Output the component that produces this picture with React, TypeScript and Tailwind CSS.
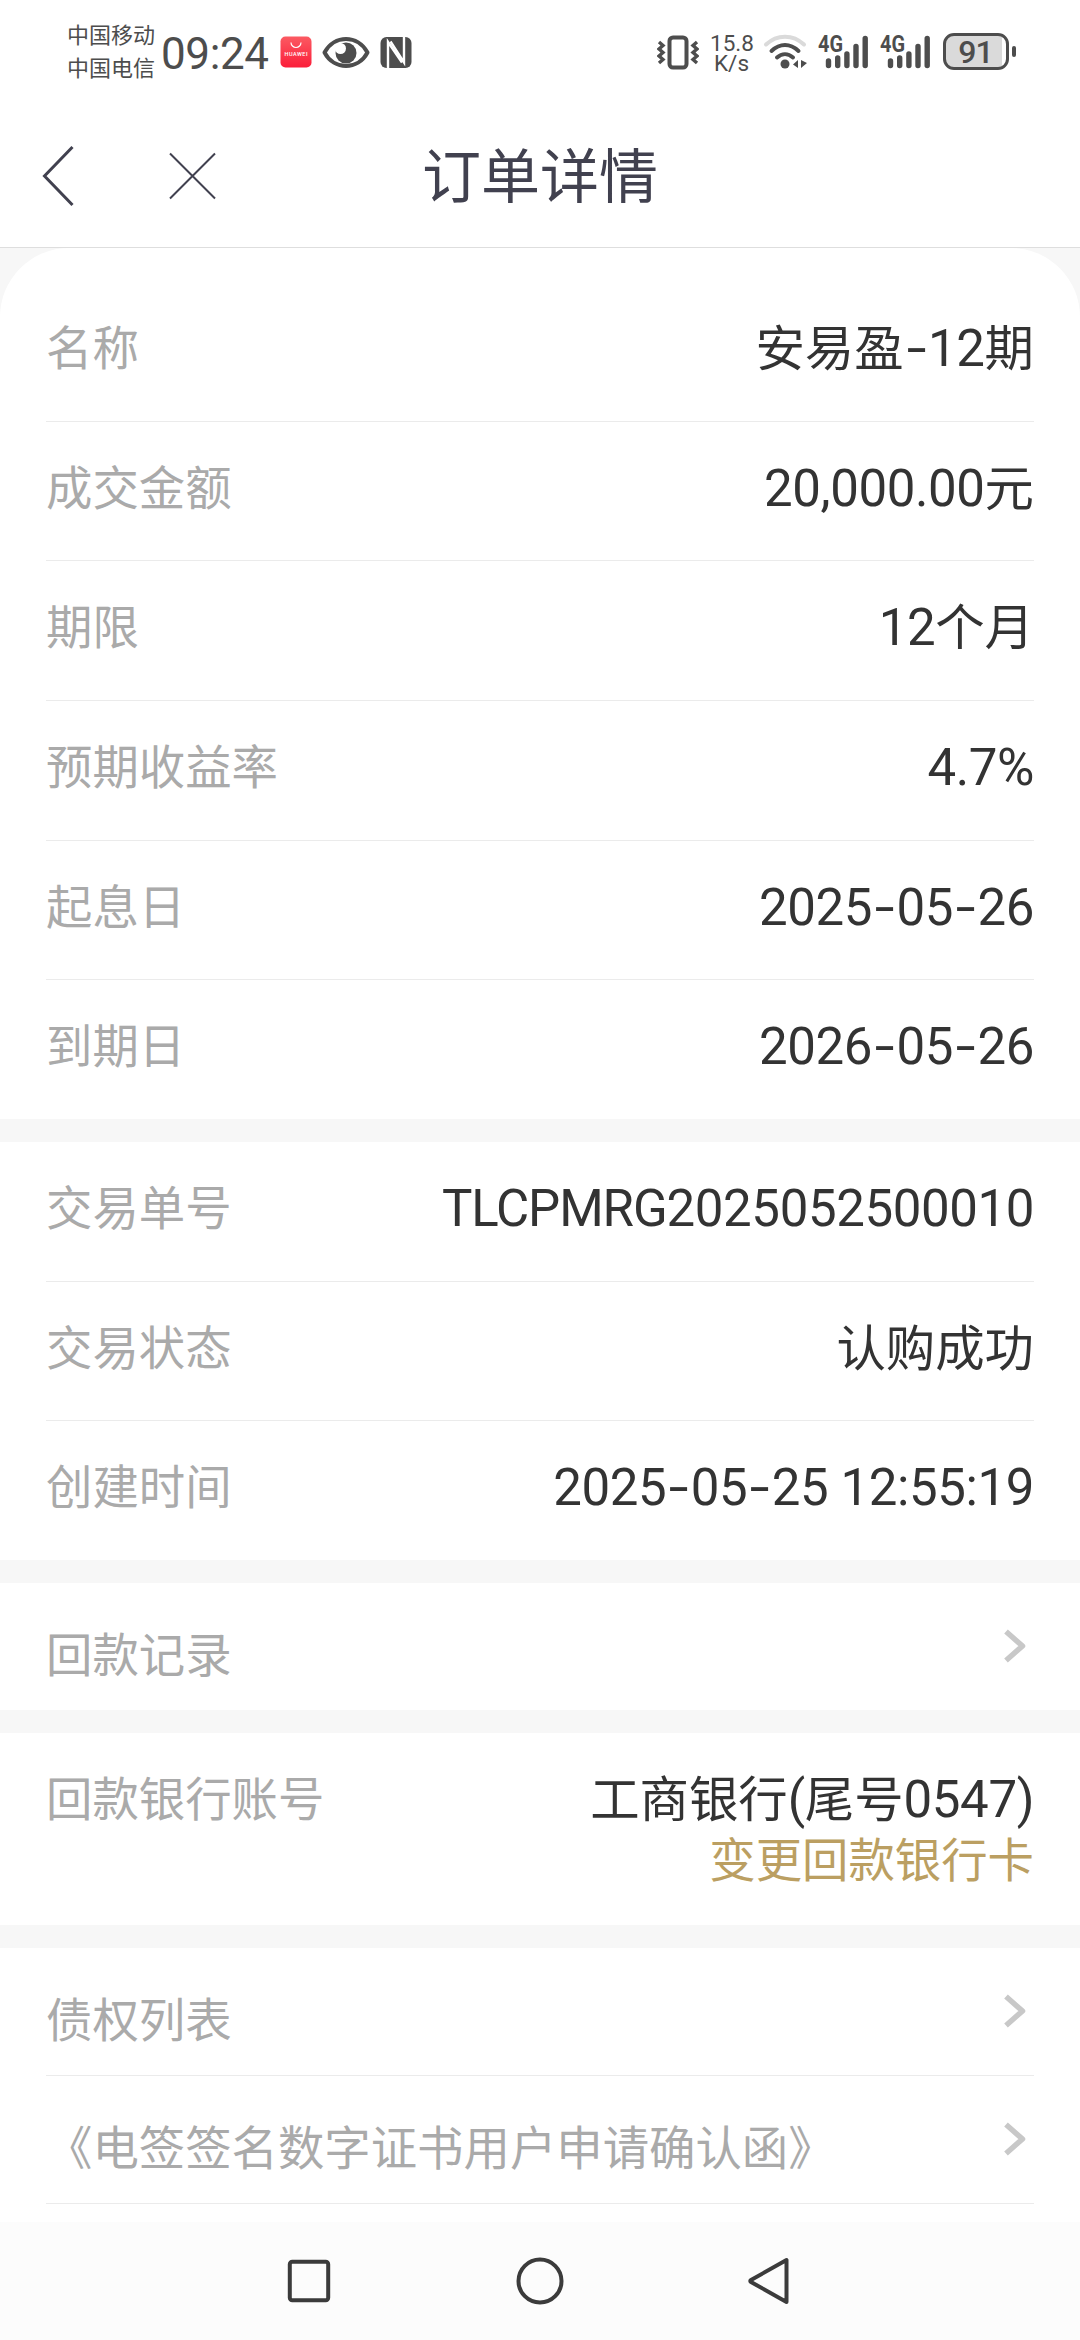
import type { ReactNode } from 'react'

type RowData = { label: string; value: ReactNode }

const ORDER_ROWS: RowData[] = [
  { label: '名称', value: <>安易盈<Num><Dash />12</Num>期</> },
  { label: '成交金额', value: <><Num>20,000.00</Num>元</> },
  { label: '期限', value: <><Num>12</Num>个月</> },
  { label: '预期收益率', value: <Num>4.7%</Num> },
  { label: '起息日', value: <Num>2025<Dash />05<Dash />26</Num> },
  { label: '到期日', value: <Num>2026<Dash />05<Dash />26</Num> },
]

const TRADE_ROWS: RowData[] = [
  {
    label: '交易单号',
    value: (
      <Num>
        <span className="tracking-[-1.1px]">TLCPMRG</span>2025052500010
      </Num>
    ),
  },
  { label: '交易状态', value: '认购成功' },
  { label: '创建时间', value: <Num>2025<Dash />05<Dash />25 12:55:19</Num> },
]

// Latin text and digits run slightly larger than the CJK around them
function Num({ children }: { children: ReactNode }) {
  return <span className="text-[51px] tracking-[-0.4px]">{children}</span>
}

function Dash() {
  return <span className="inline-block w-[24.5px] origin-center scale-x-[1.4] text-center">-</span>
}

function Signal() {
  return (
    <svg className="overflow-visible" width="52" height="36" viewBox="0 0 52 36" fill="none" stroke="#4d4d4d" strokeWidth="5.4" strokeLinecap="round">
      <text x="0" y="17.500" fill="#4d4d4d" stroke="none" fontSize="23" fontWeight="700" textLength="25" lengthAdjust="spacingAndGlyphs">4G</text>
      <path d="M10.500 27v4.500M19.700 24v7.500M28.900 20v11.500M38 12.500v19M47.200 4.500v27" />
    </svg>
  )
}

function StatusBar() {
  return (
    <div className="flex h-[106px] items-start justify-between pr-[64px] pl-[67px] text-[#4d4d4d]">
      <div className="flex items-start">
        <div className="pt-[19px] text-[22px] leading-[33px]">
          <div>中国移动</div>
          <div>中国电信</div>
        </div>
        <span className="ml-[6px] pt-[28px] text-[44px] leading-[52px] tracking-[-0.4px]">09:24</span>
        <svg className="mt-[36px] ml-[11px]" width="32" height="32" viewBox="0 0 32 32">
          <defs>
            <linearGradient id="gallery" x1="0" y1="0" x2="0" y2="1">
              <stop offset="0" stopColor="#fb5a62" />
              <stop offset="1" stopColor="#fb1e3a" />
            </linearGradient>
          </defs>
          <rect x="0.500" y="0.500" width="31" height="31" rx="5" fill="url(#gallery)" />
          <path d="M11 6.500a5 5 0 0 0 10 0" fill="none" stroke="#fff" strokeWidth="1.200" />
          <text x="16" y="19.500" fill="#fff" fontSize="5.500" fontWeight="500" textAnchor="middle" textLength="23">HUAWEI</text>
        </svg>
        <svg className="mt-[36px] ml-[10px]" width="48" height="34" viewBox="0 0 48 34" fill="none">
          <path d="M2.500 16.500C12-1.500 36-1.500 45.500 16.500C36 34.500 12 34.500 2.500 16.500Z" stroke="#4d4d4d" strokeWidth="4" strokeLinejoin="round" />
          <circle cx="24" cy="17" r="10.500" fill="#4d4d4d" />
          <circle cx="18.500" cy="12.500" r="5.500" fill="#fff" />
        </svg>
        <svg className="mt-[36px] ml-[10px]" width="32" height="33" viewBox="0 0 32 33" fill="none">
          <rect x="0.500" y="1" width="31" height="31" rx="6" fill="#4d4d4d" />
          <path d="M8 32V6L22 26.500" stroke="#fff" strokeWidth="2.400" />
          <path d="M10.500 5.500L24 26.500V1" stroke="#fff" strokeWidth="2.400" />
        </svg>
      </div>
      <div className="flex items-start">
        <svg className="mt-[35px]" width="42" height="35" viewBox="0 0 42 35" fill="none" stroke="#4d4d4d">
          <rect x="12.500" y="2.500" width="17" height="30" rx="3.500" strokeWidth="4" />
          <path d="M2 7l4 3.500-4 3.500 4 3.500-4 3.500 4 3.500-4 3.500M40 7l-4 3.500 4 3.500-4 3.500 4 3.500-4 3.500 4 3.500" strokeWidth="3.400" />
        </svg>
        <div className="mt-[33px] ml-[11px] w-[43px] text-center text-[22.5px] leading-[20px]">
          <div>15.8</div>
          <div>K/s</div>
        </div>
        <svg className="mt-[34px] ml-[10px]" width="46" height="36" viewBox="0 0 46 36" fill="none" strokeWidth="4" strokeLinecap="round">
          <path d="M3 10.500C14 0 30 0 41 10.500" stroke="#dadada" />
          <path d="M8.500 17C17 9 27 9 35.500 17M14 23.500c5-4.500 11-4.500 16 0" stroke="#4d4d4d" />
          <circle cx="22" cy="30" r="4.500" fill="#4d4d4d" />
          <path d="M35 26v8l-5-3.500zM38 26v8l6-5z" fill="#4d4d4d" />
        </svg>
        <span className="mt-[34px] ml-[9px]"><Signal /></span>
        <span className="mt-[34px] ml-[10px]"><Signal /></span>
        <div className="mt-[33px] ml-[11px] flex items-center">
          <div className="flex h-[37px] w-[66px] rounded-[11px] border-[3px] border-[#4d4d4d] bg-[linear-gradient(90deg,#dadada_56px,white_56px)]">
            <span className="w-[59px] text-center text-[32px] leading-[32px] font-medium tracking-[-1px]">91</span>
          </div>
          <div className="ml-[3px] h-[11px] w-[4px] rounded-[2px] bg-[#4d4d4d]" />
        </div>
      </div>
    </div>
  )
}

function Header() {
  return (
    <header className="flex h-[142px] items-start border-b border-[#dedede] pl-[41px]">
      <svg className="mt-[38px]" width="34" height="64" viewBox="0 0 34 64" fill="none" stroke="#41414f" strokeWidth="3">
        <path d="M31.500 3L3.500 32l28 29" />
      </svg>
      <svg className="mt-[46px] ml-[94px]" width="48" height="48" viewBox="0 0 48 48" fill="none" stroke="#41414f" strokeWidth="2">
        <path d="M1 1.500l45 45M46 1.500l-45 45" />
      </svg>
      <h1 className="mt-[28px] ml-[205px] text-[59px] leading-[88px] text-[#41414f]">订单详情</h1>
    </header>
  )
}

function Row({ label, value }: RowData) {
  return (
    <div className="flex h-[139.7px] items-start justify-between border-b border-[#ebebeb] pt-[32px] last:h-[138.5px] last:border-b-0">
      <span className="text-[46.4px] leading-[71px] text-[#aaaaaa]">{label}</span>
      <span className="text-[49.4px] leading-[70px] text-[#333333]">{value}</span>
    </div>
  )
}

function LinkRow({ label }: { label: string }) {
  return (
    <div className="flex h-[127px] items-start justify-between pr-[7px]">
      <span className="mt-[38px] text-[46.4px] leading-[70px] text-[#aaaaaa]">{label}</span>
      <svg className="mt-[46px]" width="24" height="35" viewBox="0 0 24 35" fill="none" stroke="#c8c8c8" strokeWidth="5.500" strokeLinejoin="round">
        <path d="M3 2.500l16.500 14.500L3 31.500" />
      </svg>
    </div>
  )
}

function NavBar() {
  return (
    <nav className="flex h-[118px] items-start bg-[#fcfcfc] pt-[33px] pl-[286px]">
      <svg width="504" height="52" viewBox="0 0 504 52" fill="none" stroke="#3b3b3b" strokeWidth="4">
        <rect x="3.800" y="6.800" width="38.400" height="38.400" rx="2.500" />
        <circle cx="254" cy="26" r="21.500" />
        <path d="M500.500 5v42L465 27q-1.500-1 0-2z" strokeLinejoin="round" />
      </svg>
    </nav>
  )
}

export default function App() {
  return (
    <div className="flex h-[2340px] w-[1080px] flex-col overflow-hidden bg-white font-['Roboto','Noto_Sans_CJK_SC',sans-serif]">
      <StatusBar />
      <Header />
      <main className="flex h-[1974px] flex-col gap-[23px] overflow-hidden bg-[#f7f7f7]">
        <section className="rounded-t-[69px] bg-white px-[46px] pt-[34px]">
          {ORDER_ROWS.map((row) => (
            <Row key={row.label} {...row} />
          ))}
        </section>
        <section className="bg-white px-[46px]">
          {TRADE_ROWS.map((row) => (
            <Row key={row.label} {...row} />
          ))}
        </section>
        <section className="bg-white px-[46px]">
          <LinkRow label="回款记录" />
        </section>
        <section className="flex h-[192px] items-start justify-between bg-white px-[46px] pt-[32px]">
          <span className="text-[46.4px] leading-[71px] text-[#aaaaaa]">回款银行账号</span>
          <div className="flex flex-col items-end">
            <span className="text-[49.4px] leading-[70px] text-[#333333]">
              工商银行<Num>(</Num>尾号<Num>0547)</Num>
            </span>
            <span className="-mt-[9px] text-[46.4px] leading-[70px] text-[#bb9f62]">变更回款银行卡</span>
          </div>
        </section>
        <section className="flex-1 bg-white px-[46px]">
          <div className="border-b border-[#ebebeb]">
            <LinkRow label="债权列表" />
          </div>
          <div className="border-b border-[#ebebeb]">
            <LinkRow label="《电签签名数字证书用户申请确认函》" />
          </div>
        </section>
      </main>
      <NavBar />
    </div>
  )
}
